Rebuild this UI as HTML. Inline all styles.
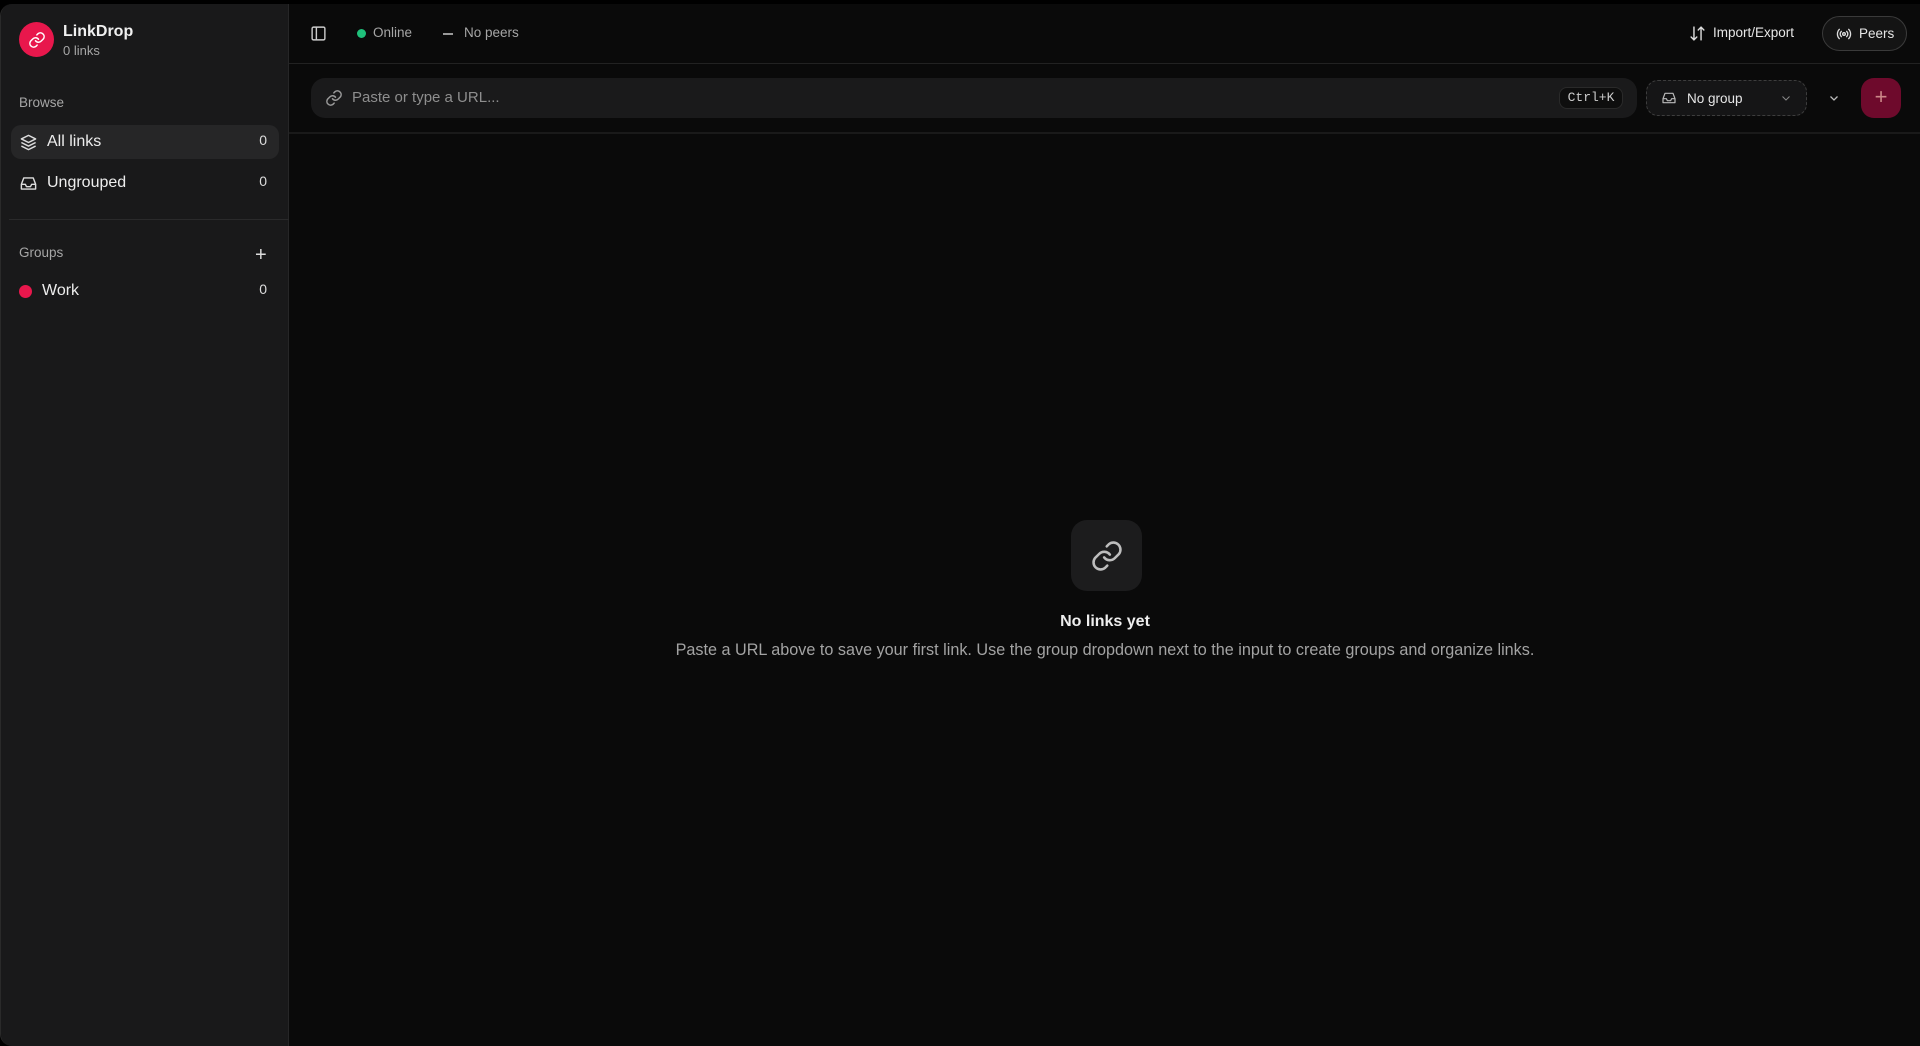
<!DOCTYPE html>
<html><head><meta charset="utf-8"><style>
*{box-sizing:border-box;margin:0;padding:0}
body{width:1920px;height:1046px;background:#000;font-family:"Liberation Sans",sans-serif;color:#e8e8e8;overflow:hidden;position:relative}
.app{position:absolute;left:0;top:4px;width:1920px;height:1042px;background:#0a0a0a;border-radius:12px 0 0 12px;overflow:hidden;border-left:1px solid #2a2a2a}
.side{position:absolute;left:0;top:0;width:288px;height:100%;background:#19191a;border-right:1px solid #262627}
.abs{position:absolute}
svg{display:block}
.row{position:absolute;left:10px;width:268px;height:34px;border-radius:10px;display:flex;align-items:center;font-size:16px;color:#ededed}
.cnt{position:absolute;right:12px;top:7px;font-size:14px;color:#ddd}
.muted{color:#a6a6a6}
</style></head><body>
<div class="app">
<div class="side">
  <div class="abs" style="left:18px;top:18px;width:35px;height:35px;border-radius:50%;background:#e8174c;display:flex;align-items:center;justify-content:center">
    <svg width="18" height="18" viewBox="0 0 24 24" fill="none" stroke="#fff" stroke-width="2" stroke-linecap="round"><path d="M10 13a5 5 0 0 0 7.5.5l3-3a5 5 0 0 0-7-7l-1.7 1.7"/><path d="M14 11a5 5 0 0 0-7.5-.5l-3 3a5 5 0 0 0 7 7l1.7-1.7"/></svg>
  </div>
  <div class="abs" style="left:62px;top:19px;font-size:16px;font-weight:bold;color:#f0f0f0">LinkDrop</div>
  <div class="abs muted" style="left:62px;top:39px;font-size:13px">0 links</div>
  <div class="abs muted" style="left:18px;top:91px;font-size:13.5px">Browse</div>
  <div class="row" style="top:121px;background:#262627">
    <svg style="margin-left:8px" width="19" height="19" viewBox="0 0 24 24" fill="none" stroke="#ddd" stroke-width="1.8" stroke-linejoin="round"><path d="M12 3 3 7.5 12 12l9-4.5z"/><path d="M3 12l9 4.5 9-4.5"/><path d="M3 16.5 12 21l9-4.5"/></svg>
    <span style="margin-left:9px;margin-top:-1px">All links</span><span class="cnt">0</span></div>
  <div class="row" style="top:162px">
    <svg style="margin-left:8px" width="19" height="19" viewBox="0 0 24 24" fill="none" stroke="#ddd" stroke-width="1.8" stroke-linejoin="round"><path d="M3 13l3-8h12l3 8v6H3z"/><path d="M3 13h5l1.5 3h5L16 13h5"/></svg>
    <span style="margin-left:9px;margin-top:-1px">Ungrouped</span><span class="cnt">0</span></div>
  <div class="abs" style="left:8px;top:215px;width:280px;height:1px;background:#2a2a2b"></div>
  <div class="abs muted" style="left:18px;top:241px;font-size:13.5px">Groups</div>
  <div class="abs" style="left:254px;top:243px;font-size:20px;color:#ddd;line-height:16px">+</div>
  <div class="row" style="top:270px">
    <span style="margin-left:8px;width:13px;height:13px;border-radius:50%;background:#e8174c"></span>
    <span style="margin-left:10px;margin-top:-1px">Work</span><span class="cnt">0</span></div>
</div>

<div class="abs" style="left:288px;top:59px;width:1632px;height:1px;background:#222"></div>
<div class="abs" style="left:288px;top:128px;width:1632px;height:2px;background:#1a1a1a"></div>
<svg class="abs" style="left:309px;top:21px" width="17" height="17" viewBox="0 0 24 24" fill="none" stroke="#ccc" stroke-width="2"><rect x="3" y="3" width="18" height="18" rx="2"/><path d="M9 3v18"/></svg>
<div class="abs" style="left:356px;top:25px;width:9px;height:9px;border-radius:50%;background:#1fc07a"></div>
<div class="abs muted" style="left:372px;top:21px;font-size:13.5px">Online</div>
<div class="abs" style="left:442px;top:29px;width:10px;height:1.5px;background:#999"></div>
<div class="abs muted" style="left:463px;top:21px;font-size:13.5px">No peers</div>
<svg class="abs" style="left:1688px;top:21px" width="17" height="17" viewBox="0 0 24 24" fill="none" stroke="#ddd" stroke-width="2" stroke-linecap="round"><path d="M7 3v18M3 17l4 4 4-4M17 21V3M13 7l4-4 4 4"/></svg>
<div class="abs" style="left:1712px;top:21px;font-size:13.5px;color:#e6e6e6">Import/Export</div>
<div class="abs" style="left:1821px;top:12px;width:85px;height:35px;border:1px solid #3a3a3a;border-radius:18px;background:#141414;display:flex;align-items:center;font-size:13.5px;color:#e6e6e6">
  <svg style="margin-left:12px;margin-right:6px" width="18" height="16" viewBox="0 0 24 24" fill="none" stroke="#ddd" stroke-width="2" stroke-linecap="round"><circle cx="12" cy="12" r="2"/><path d="M8 8a5.5 5.5 0 0 0 0 8M16 8a5.5 5.5 0 0 1 0 8M5 5a10 10 0 0 0 0 14M19 5a10 10 0 0 1 0 14"/></svg>Peers</div>

<div class="abs" style="left:310px;top:74px;width:1326px;height:40px;border-radius:14px;background:#1a1a1b"></div>
<svg class="abs" style="left:324px;top:85px" width="18" height="18" viewBox="0 0 24 24" fill="none" stroke="#999" stroke-width="2" stroke-linecap="round"><path d="M10 13a5 5 0 0 0 7.5.5l3-3a5 5 0 0 0-7-7l-1.7 1.7"/><path d="M14 11a5 5 0 0 0-7.5-.5l-3 3a5 5 0 0 0 7 7l1.7-1.7"/></svg>
<div class="abs" style="left:351px;top:85px;font-size:15px;color:#8e8e8e">Paste or type a URL...</div>
<div class="abs" style="left:1558px;top:83px;width:64px;height:22px;border-radius:8px;background:#0e0e0e;border:1px solid #2a2a2a;font-family:'Liberation Mono',monospace;font-size:13px;color:#ccc;text-align:center;line-height:20px">Ctrl+K</div>
<div class="abs" style="left:1645px;top:76px;width:161px;height:36px;border-radius:12px;border:1px dashed #3d3d3d;background:#151516;display:flex;align-items:center;font-size:13.5px;color:#e6e6e6">
  <svg style="margin-left:13px;margin-right:9px" width="18" height="16" viewBox="0 0 24 24" fill="none" stroke="#bbb" stroke-width="1.8" stroke-linejoin="round"><path d="M3 13l3-8h12l3 8v6H3z"/><path d="M3 13h5l1.5 3h5L16 13h5"/></svg>No group
  <svg style="position:absolute;right:14px" width="12" height="12" viewBox="0 0 24 24" fill="none" stroke="#888" stroke-width="2"><path d="M5 9l7 7 7-7"/></svg></div>
<svg class="abs" style="left:1827px;top:88px" width="12" height="12" viewBox="0 0 24 24" fill="none" stroke="#bbb" stroke-width="2.5"><path d="M5 9l7 7 7-7"/></svg>
<div class="abs" style="left:1860px;top:74px;width:40px;height:40px;border-radius:13px;background:#6e0a2c;color:#c88;font-size:22px;text-align:center;line-height:38px">+</div>

<div class="abs" style="left:1070px;top:516px;width:71px;height:71px;border-radius:16px;background:#1c1c1d;display:flex;align-items:center;justify-content:center">
  <svg width="34" height="34" viewBox="0 0 24 24" fill="none" stroke="#bdbdbd" stroke-width="1.8" stroke-linecap="round"><path d="M10 13a5 5 0 0 0 7.5.5l3-3a5 5 0 0 0-7-7l-1.7 1.7"/><path d="M14 11a5 5 0 0 0-7.5-.5l-3 3a5 5 0 0 0 7 7l1.7-1.7"/></svg></div>
<div class="abs" style="left:288px;width:1632px;top:609px;text-align:center;font-size:16px;font-weight:bold;color:#eee">No links yet</div>
<div class="abs" style="left:288px;width:1632px;top:637px;text-align:center;font-size:16.2px;color:#a3a3a3">Paste a URL above to save your first link. Use the group dropdown next to the input to create groups and organize links.</div>
</div>
</body></html>
